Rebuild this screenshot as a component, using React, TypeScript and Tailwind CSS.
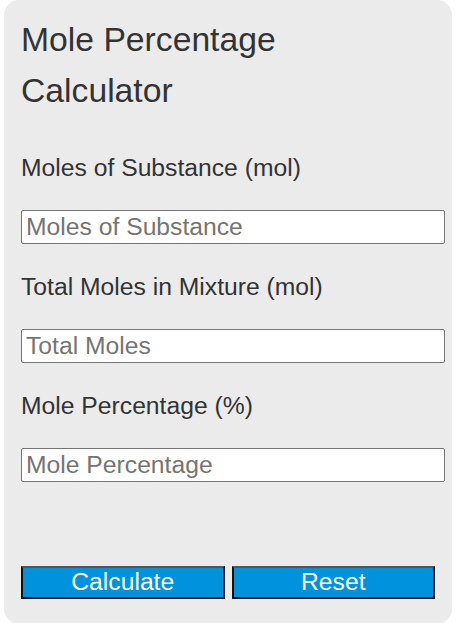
export default function App() {
  return (
    <main
      className="h-[623px] overflow-hidden bg-white px-[4px] text-[#333]"
      style={{ fontFamily: '"Liberation Sans", Arial, sans-serif' }}
    >
      <div className="h-[624px] rounded-[15px] bg-[#ebebeb] px-[17px] pt-[14px]">
        {/* Title */}
        <h1 className="text-[33.7px] leading-[51px] font-normal">
          Mole Percentage
          <br />
          Calculator
        </h1>

        {/* Fields */}
        <div className="mt-[34px]">
          {[
            ["Moles of Substance (mol)", "Moles of Substance"],
            ["Total Moles in Mixture (mol)", "Total Moles"],
            ["Mole Percentage (%)", "Mole Percentage"],
          ].map(([label, placeholder]) => (
            <div key={label} className="mb-[25px]">
              <label className="block text-[24.7px] leading-[36px]">{label}</label>
              <input
                type="text"
                placeholder={placeholder}
                className="mt-[24px] box-content block h-[28px] w-full rounded-[2px] border border-[#767676] bg-white px-[4px] py-[2px] text-[24.7px] leading-[28px] text-[#333] placeholder:text-[#757575] outline-none"
              />
            </div>
          ))}
        </div>

        {/* Buttons */}
        <div className="mt-[84px] grid grid-cols-2 gap-[7px]">
          <button className="h-[33px] border-2 border-[#111] border-t-[#555] bg-[#0092dd] text-[24.7px] leading-none text-white">
            Calculate
          </button>
          <button className="h-[33px] border-2 border-[#111] border-t-[#555] bg-[#0092dd] text-[24.7px] leading-none text-white">
            Reset
          </button>
        </div>
      </div>
    </main>
  );
}
